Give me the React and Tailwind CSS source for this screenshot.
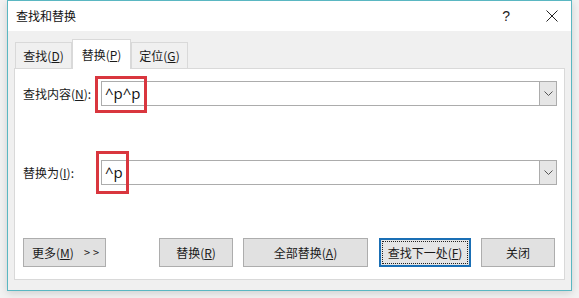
const FONT = { fontFamily: '"Noto Sans CJK SC", "Noto Sans", sans-serif' }

function Tab({ label, hotkey, active }) {
  return (
    <div
      className={
        active
          ? 'h-[30px] w-[59px] flex items-center justify-center bg-white border border-[#d9d9d9] border-b-0 -mb-px relative z-10'
          : 'h-[26px] w-[57px] flex items-center justify-center bg-[#f0f0f0] border border-[#d9d9d9] border-b-0 mt-[3px]'
      }
    >
      <span className="text-[12px] text-[#1a1a1a]">
        {label}(<span className="underline">{hotkey}</span>)
      </span>
    </div>
  )
}

function Combo({ value }) {
  return (
    <div className="flex-1 h-[25px] flex border border-[#acacac] bg-white">
      <div className="flex-1 flex items-center pl-[3px] text-[15px] text-[#111]" style={{ fontFamily: '"Open Sans", "Noto Sans", sans-serif' }}>
        {value}
      </div>
      <div className="w-[17px] bg-[#e6e6e6] border-l border-[#acacac] flex items-center justify-center">
        <svg width="9" height="5" viewBox="0 0 9 5">
          <path d="M0.5 0.5 L4.5 4.5 L8.5 0.5" fill="none" stroke="#555" strokeWidth="1" />
        </svg>
      </div>
    </div>
  )
}

function Btn({ children, className = '', focused }) {
  return (
    <div
      className={
        'h-[29px] flex items-center justify-center text-[12px] text-[#1a1a1a] ' +
        (focused
          ? 'border-2 border-[#1a6fb5] bg-[#e5e5e5] p-[1px] '
          : 'border border-[#adadad] bg-[#e1e1e1] ') +
        className
      }
    >
      {focused ? (
        <div className="w-full h-full flex items-center justify-center border border-dotted border-[#222]">{children}</div>
      ) : (
        children
      )}
    </div>
  )
}

export default function App() {
  return (
    <div className="w-[579px] h-[298px] bg-[#f2f2f2] overflow-hidden" style={FONT}>
      <div className="ml-[7px] w-[565px] h-[291px] border border-[#5ab7c2] bg-[#f0f0f0] flex flex-col shadow-[0_2px_8px_rgba(0,0,0,0.15)]">
        {/* Title bar */}
        <div className="h-[30px] bg-white flex items-center pl-[8px] pr-[12px]">
          <span className="text-[12px] text-[#111]">查找和替换</span>
          <span className="ml-auto text-[14px] text-[#222] mr-[36px]" style={{ fontFamily: '"Liberation Sans", sans-serif' }}>?</span>
          <svg width="12" height="12" viewBox="0 0 12 12" className="mr-[1px]">
            <path d="M0.5 0.5 L11.5 11.5 M11.5 0.5 L0.5 11.5" stroke="#222" strokeWidth="1" />
          </svg>
        </div>

        {/* Body */}
        <div className="flex-1 px-[6px] pt-[8px] pb-[10px] flex flex-col">
          <div className="flex items-end pl-[1px] h-[29px]">
            <Tab label="查找" hotkey="D" />
            <Tab label="替换" hotkey="P" active />
            <Tab label="定位" hotkey="G" />
          </div>
          <div className="flex-1 bg-white border border-[#d9d9d9] relative pl-[8px] pr-[7px] pt-[12px] pb-[12px] flex flex-col">
            <div className="flex items-center">
              <span className="w-[78px] text-[12px] text-[#1a1a1a]">
                查找内容(<span className="underline">N</span>):
              </span>
              <Combo value="^p^p" />
            </div>
            <div className="flex items-center mt-[54px]">
              <span className="w-[78px] text-[12px] text-[#1a1a1a]">
                替换为(<span className="underline">I</span>):
              </span>
              <Combo value="^p" />
            </div>
            <div className="flex items-center mt-auto">
              <Btn className="w-[83px] gap-[10px] justify-start pl-[8px]">
                <span>更多(<span className="underline">M</span>)</span>
                <span className="text-[11px] tracking-[3px]">&gt;&gt;</span>
              </Btn>
              <Btn className="w-[74px] ml-[53px]">
                <span>替换(<span className="underline">R</span>)</span>
              </Btn>
              <Btn className="w-[125px] ml-[10px]">
                <span>全部替换(<span className="underline">A</span>)</span>
              </Btn>
              <Btn className="w-[92px] ml-[11px]" focused>
                <span>查找下一处(<span className="underline">F</span>)</span>
              </Btn>
              <Btn className="w-[74px] ml-[10px]">
                <span>关闭</span>
              </Btn>
            </div>

            {/* Red annotation boxes */}
            <div className="absolute left-[80px] top-[7px] w-[52px] h-[37px] border-[3px] border-[#d9363e]" />
            <div className="absolute left-[81px] top-[82px] w-[33px] h-[43px] border-[3px] border-[#d9363e]" />
          </div>
        </div>
      </div>
    </div>
  )
}
